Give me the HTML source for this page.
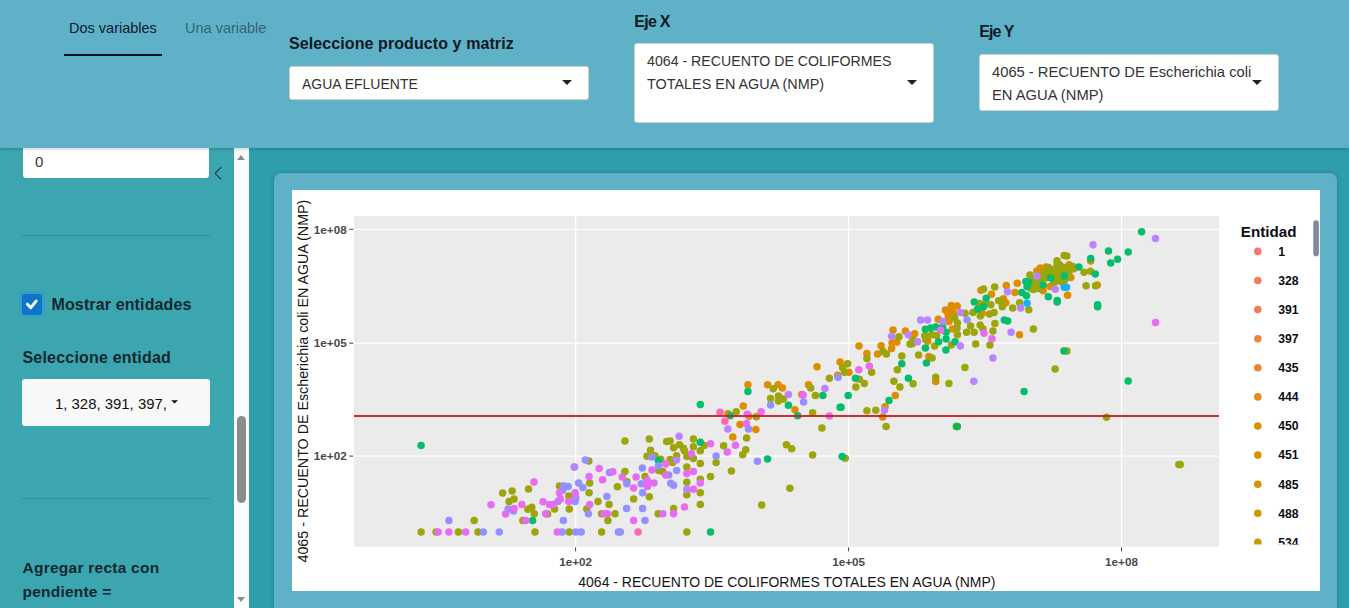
<!DOCTYPE html>
<html><head><meta charset="utf-8">
<style>
*{box-sizing:border-box;margin:0;padding:0}
html,body{width:1349px;height:608px;overflow:hidden;background:#2e9eaa;font-family:"Liberation Sans",sans-serif;color:#1a1a1a}
.abs{position:absolute}
.t{position:absolute;white-space:nowrap;transform-origin:0 50%;line-height:normal}
#hdr{position:absolute;left:0;top:0;width:1349px;height:148px;background:#5fb1c8;box-shadow:0 1px 3px rgba(0,0,0,.22);z-index:5}
.lbl{font-weight:bold;font-size:16px;color:#10191e}
.sel{position:absolute;background:#fff;border:1px solid #cfcfcf;border-radius:3px}
.st{font-size:15px;color:#333}
.caret{position:absolute;width:0;height:0;border-left:5px solid transparent;border-right:5px solid transparent;border-top:5px solid #222}
#side{position:absolute;left:0;top:148px;width:234px;height:460px;background:#3ba6b0;overflow:hidden}
#sb{position:absolute;left:234px;top:148px;width:15px;height:460px;background:#fcfcfc}
#card{position:absolute;left:274px;top:172.6px;width:1063px;height:470px;background:#5fb1c8;border-radius:7px;box-shadow:0 0 4px rgba(0,0,0,.22)}
#plot{position:absolute;left:292px;top:190px;width:1028px;height:401px;background:#fff}
</style></head><body>
<div id="hdr">
  <div class="t" style="left:69px;top:20px;font-size:14.5px;color:#10202c">Dos variables</div>
  <div class="abs" style="left:64px;top:54px;width:98px;height:2px;background:#0b1218"></div>
  <div class="t" style="left:185px;top:20px;font-size:14.5px;color:#356470">Una variable</div>

  <div class="t lbl" style="left:289px;top:35.4px;letter-spacing:0.09px">Seleccione producto y matriz</div>
  <div class="sel" style="left:288.6px;top:65.6px;width:300.8px;height:34.6px"></div>
  <div class="t st" style="left:301.6px;top:75px;transform:scaleX(.932)">AGUA EFLUENTE</div>
  <div class="caret" style="left:562px;top:80px"></div>

  <div class="t lbl" style="left:634.2px;top:12.6px;letter-spacing:-0.7px">Eje X</div>
  <div class="sel" style="left:633.6px;top:42.7px;width:300.8px;height:80.5px"></div>
  <div class="t st" style="left:646.6px;top:52.4px;transform:scaleX(.944)">4064 - RECUENTO DE COLIFORMES</div>
  <div class="t st" style="left:646.6px;top:74.8px;transform:scaleX(.96)">TOTALES EN AGUA (NMP)</div>
  <div class="caret" style="left:907px;top:80px"></div>

  <div class="t lbl" style="left:979.2px;top:23px;letter-spacing:-0.9px">Eje Y</div>
  <div class="sel" style="left:978.6px;top:53.8px;width:300.8px;height:57.5px"></div>
  <div class="t st" style="left:991.6px;top:62.7px;transform:scaleX(.982)">4065 - RECUENTO DE Escherichia coli</div>
  <div class="t st" style="left:991.6px;top:86.3px;transform:scaleX(.983)">EN AGUA (NMP)</div>
  <div class="caret" style="left:1252px;top:80px"></div>
</div>

<div id="side">
  <div class="abs" style="left:22.5px;top:-6px;width:186.5px;height:36px;background:#fff;border-radius:3px"></div>
  <div class="t st" style="left:35px;top:5.1px">0</div>
  <svg class="abs" style="left:212px;top:17px" width="12" height="18"><path d="M9.2 2.2 L3 8.3 L9.2 14.4" fill="none" stroke="#173844" stroke-width="1.1"/></svg>
  <div class="abs" style="left:22px;top:86.5px;width:188px;height:1px;background:#2f8f9b"></div>
  <div class="abs" style="left:18.5px;top:142.5px;width:26px;height:26px;border-radius:5px;background:#3a9cc4"></div>
  <div class="abs" style="left:22px;top:146px;width:20px;height:21px;border-radius:3px;background:#0b76c8"></div>
  <svg class="abs" style="left:22px;top:146px" width="20" height="21"><path d="M5.4 10.2 L8.8 13.6 L14.2 7" fill="none" stroke="#fff" stroke-width="3" stroke-linecap="round" stroke-linejoin="round"/></svg>
  <div class="t lbl" style="left:51.5px;top:147.8px;letter-spacing:0.13px;color:#12262e">Mostrar entidades</div>
  <div class="t lbl" style="left:22.5px;top:201.2px;letter-spacing:0.2px;color:#12262e">Seleccione entidad</div>
  <div class="abs" style="left:22px;top:231px;width:188px;height:46.5px;background:#f8f8f8;border-radius:3px"></div>
  <div class="t" style="left:54.6px;top:246.6px;font-size:15px;color:#111;transform:scaleX(.994)">1, 328, 391, 397,</div>
  <svg class="abs" style="left:170px;top:250px" width="10" height="8"><path d="M1.2 2.2 L8 2.2 L4.6 5.6 Z" fill="#111"/></svg>
  <div class="abs" style="left:22px;top:350px;width:188px;height:1px;background:#2f8f9b"></div>
  <div class="t lbl" style="left:22.5px;top:410.6px;font-size:15.5px;letter-spacing:0.25px;color:#12262e">Agregar recta con</div>
  <div class="t lbl" style="left:22.5px;top:434.8px;font-size:15.5px;letter-spacing:0.22px;color:#12262e">pendiente =</div>
</div>
<div id="sb">
  <div class="abs" style="left:3px;top:7px;width:0;height:0;border-left:4.5px solid transparent;border-right:4.5px solid transparent;border-bottom:5px solid #8b8b8b"></div>
  <div class="abs" style="left:3px;top:267.5px;width:9px;height:87px;border-radius:4.5px;background:#8c8c8c"></div>
  <div class="abs" style="left:3px;top:449px;width:0;height:0;border-left:4.5px solid transparent;border-right:4.5px solid transparent;border-top:5px solid #8b8b8b"></div>
</div>

<div id="card"></div>
<div id="plot">
<svg width="1028" height="401" viewBox="292 190 1028 401" style="position:absolute;left:0;top:0;font-family:'Liberation Sans',sans-serif">
  <rect x="354" y="216" width="865" height="330.7" fill="#ebebeb"/>
  <g stroke="#fff" stroke-width="1.3">
    <line x1="354" x2="1219" y1="229.3" y2="229.3"/><line x1="354" x2="1219" y1="343.2" y2="343.2"/><line x1="354" x2="1219" y1="456.1" y2="456.1"/>
    <line y1="216" y2="546.7" x1="575.6" x2="575.6"/><line y1="216" y2="546.7" x1="848.6" x2="848.6"/><line y1="216" y2="546.7" x1="1121.5" x2="1121.5"/>
  </g>
  <g id="pts">
<circle cx="732.8" cy="436.9" r="3.75" fill="#de8c00"/>
<circle cx="727.9" cy="413.8" r="3.75" fill="#de8c00"/>
<circle cx="743.3" cy="405.9" r="3.75" fill="#de8c00"/>
<circle cx="747.9" cy="384.7" r="3.75" fill="#de8c00"/>
<circle cx="748.9" cy="416.3" r="3.75" fill="#de8c00"/>
<circle cx="740.0" cy="424.6" r="3.75" fill="#de8c00"/>
<circle cx="755.8" cy="429.5" r="3.75" fill="#de8c00"/>
<circle cx="767.6" cy="384.7" r="3.75" fill="#de8c00"/>
<circle cx="778.1" cy="384.7" r="3.75" fill="#de8c00"/>
<circle cx="782.4" cy="388.1" r="3.75" fill="#de8c00"/>
<circle cx="794.9" cy="409.8" r="3.75" fill="#de8c00"/>
<circle cx="801.8" cy="394.6" r="3.75" fill="#de8c00"/>
<circle cx="808.5" cy="384.7" r="3.75" fill="#de8c00"/>
<circle cx="817.0" cy="366.8" r="3.75" fill="#de8c00"/>
<circle cx="837.7" cy="375.3" r="3.75" fill="#de8c00"/>
<circle cx="840.1" cy="362.0" r="3.75" fill="#de8c00"/>
<circle cx="848.9" cy="372.3" r="3.75" fill="#de8c00"/>
<circle cx="859.0" cy="346.1" r="3.75" fill="#de8c00"/>
<circle cx="866.9" cy="353.6" r="3.75" fill="#de8c00"/>
<circle cx="877.6" cy="353.9" r="3.75" fill="#de8c00"/>
<circle cx="881.1" cy="345.7" r="3.75" fill="#de8c00"/>
<circle cx="885.1" cy="406.8" r="3.75" fill="#de8c00"/>
<circle cx="882.7" cy="417.1" r="3.75" fill="#de8c00"/>
<circle cx="895.3" cy="395.6" r="3.75" fill="#de8c00"/>
<circle cx="891.6" cy="348.6" r="3.75" fill="#de8c00"/>
<circle cx="892.0" cy="342.7" r="3.75" fill="#de8c00"/>
<circle cx="896.9" cy="342.1" r="3.75" fill="#de8c00"/>
<circle cx="893.0" cy="329.9" r="3.75" fill="#de8c00"/>
<circle cx="905.4" cy="330.9" r="3.75" fill="#de8c00"/>
<circle cx="914.7" cy="333.8" r="3.75" fill="#de8c00"/>
<circle cx="1019.5" cy="334.8" r="3.75" fill="#de8c00"/>
<circle cx="935.7" cy="381.6" r="3.75" fill="#de8c00"/>
<circle cx="928.8" cy="356.5" r="3.75" fill="#de8c00"/>
<circle cx="927.8" cy="341.3" r="3.75" fill="#de8c00"/>
<circle cx="952.4" cy="328.9" r="3.75" fill="#de8c00"/>
<circle cx="948.9" cy="321.6" r="3.75" fill="#de8c00"/>
<circle cx="1067.6" cy="295.3" r="3.75" fill="#de8c00"/>
<circle cx="1090.7" cy="261.0" r="3.75" fill="#de8c00"/>
<circle cx="1046.1" cy="267.1" r="3.75" fill="#de8c00"/>
<circle cx="1036.8" cy="271.1" r="3.75" fill="#de8c00"/>
<circle cx="1073.7" cy="268.8" r="3.75" fill="#de8c00"/>
<circle cx="1069.1" cy="264.8" r="3.75" fill="#de8c00"/>
<circle cx="1070.8" cy="277.4" r="3.75" fill="#de8c00"/>
<circle cx="1097.3" cy="285.1" r="3.75" fill="#de8c00"/>
<circle cx="1050.1" cy="286.6" r="3.75" fill="#de8c00"/>
<circle cx="1043.2" cy="290.7" r="3.75" fill="#de8c00"/>
<circle cx="1017.3" cy="283.2" r="3.75" fill="#de8c00"/>
<circle cx="1006.3" cy="285.5" r="3.75" fill="#de8c00"/>
<circle cx="1015.0" cy="292.4" r="3.75" fill="#de8c00"/>
<circle cx="1037.1" cy="284.0" r="3.75" fill="#de8c00"/>
<circle cx="1040.3" cy="267.9" r="3.75" fill="#de8c00"/>
<circle cx="1003.5" cy="298.7" r="3.75" fill="#de8c00"/>
<circle cx="1005.8" cy="302.7" r="3.75" fill="#de8c00"/>
<circle cx="938.2" cy="319.2" r="3.75" fill="#de8c00"/>
<circle cx="945.4" cy="310.0" r="3.75" fill="#de8c00"/>
<circle cx="948.0" cy="313.9" r="3.75" fill="#de8c00"/>
<circle cx="951.3" cy="305.4" r="3.75" fill="#de8c00"/>
<circle cx="957.2" cy="306.1" r="3.75" fill="#de8c00"/>
<circle cx="948.0" cy="319.2" r="3.75" fill="#de8c00"/>
<circle cx="982.2" cy="313.3" r="3.75" fill="#de8c00"/>
<circle cx="980.9" cy="290.3" r="3.75" fill="#de8c00"/>
<circle cx="991.4" cy="294.2" r="3.75" fill="#de8c00"/>
<circle cx="952.6" cy="310.7" r="3.75" fill="#de8c00"/>
<circle cx="950.7" cy="317.9" r="3.75" fill="#de8c00"/>
<circle cx="953.9" cy="314.2" r="3.75" fill="#de8c00"/>
<circle cx="421.1" cy="532.0" r="3.75" fill="#9ca50a"/>
<circle cx="436.1" cy="532.0" r="3.75" fill="#9ca50a"/>
<circle cx="458.4" cy="532.0" r="3.75" fill="#9ca50a"/>
<circle cx="474.2" cy="520.6" r="3.75" fill="#9ca50a"/>
<circle cx="478.0" cy="532.0" r="3.75" fill="#9ca50a"/>
<circle cx="502.6" cy="493.0" r="3.75" fill="#9ca50a"/>
<circle cx="512.1" cy="491.0" r="3.75" fill="#9ca50a"/>
<circle cx="514.1" cy="499.1" r="3.75" fill="#9ca50a"/>
<circle cx="509.1" cy="501.4" r="3.75" fill="#9ca50a"/>
<circle cx="528.5" cy="489.0" r="3.75" fill="#9ca50a"/>
<circle cx="531.8" cy="507.2" r="3.75" fill="#9ca50a"/>
<circle cx="527.9" cy="509.3" r="3.75" fill="#9ca50a"/>
<circle cx="534.2" cy="513.7" r="3.75" fill="#9ca50a"/>
<circle cx="522.8" cy="520.6" r="3.75" fill="#9ca50a"/>
<circle cx="535.0" cy="532.0" r="3.75" fill="#9ca50a"/>
<circle cx="547.6" cy="514.1" r="3.75" fill="#9ca50a"/>
<circle cx="554.5" cy="508.9" r="3.75" fill="#9ca50a"/>
<circle cx="559.5" cy="485.9" r="3.75" fill="#9ca50a"/>
<circle cx="568.8" cy="496.1" r="3.75" fill="#9ca50a"/>
<circle cx="569.3" cy="508.9" r="3.75" fill="#9ca50a"/>
<circle cx="569.3" cy="532.0" r="3.75" fill="#9ca50a"/>
<circle cx="588.8" cy="461.0" r="3.75" fill="#9ca50a"/>
<circle cx="589.7" cy="482.9" r="3.75" fill="#9ca50a"/>
<circle cx="589.1" cy="492.8" r="3.75" fill="#9ca50a"/>
<circle cx="586.8" cy="508.9" r="3.75" fill="#9ca50a"/>
<circle cx="598.0" cy="501.4" r="3.75" fill="#9ca50a"/>
<circle cx="609.1" cy="504.6" r="3.75" fill="#9ca50a"/>
<circle cx="601.6" cy="513.7" r="3.75" fill="#9ca50a"/>
<circle cx="615.0" cy="513.7" r="3.75" fill="#9ca50a"/>
<circle cx="607.9" cy="520.6" r="3.75" fill="#9ca50a"/>
<circle cx="617.4" cy="486.8" r="3.75" fill="#9ca50a"/>
<circle cx="624.9" cy="471.4" r="3.75" fill="#9ca50a"/>
<circle cx="626.8" cy="481.7" r="3.75" fill="#9ca50a"/>
<circle cx="633.6" cy="499.1" r="3.75" fill="#9ca50a"/>
<circle cx="624.9" cy="440.9" r="3.75" fill="#9ca50a"/>
<circle cx="645.0" cy="476.4" r="3.75" fill="#9ca50a"/>
<circle cx="649.3" cy="496.7" r="3.75" fill="#9ca50a"/>
<circle cx="601.6" cy="532.0" r="3.75" fill="#9ca50a"/>
<circle cx="649.3" cy="438.9" r="3.75" fill="#9ca50a"/>
<circle cx="650.5" cy="450.3" r="3.75" fill="#9ca50a"/>
<circle cx="647.0" cy="456.2" r="3.75" fill="#9ca50a"/>
<circle cx="654.9" cy="455.7" r="3.75" fill="#9ca50a"/>
<circle cx="660.8" cy="459.2" r="3.75" fill="#9ca50a"/>
<circle cx="658.8" cy="470.5" r="3.75" fill="#9ca50a"/>
<circle cx="662.8" cy="471.4" r="3.75" fill="#9ca50a"/>
<circle cx="666.7" cy="441.4" r="3.75" fill="#9ca50a"/>
<circle cx="670.1" cy="440.9" r="3.75" fill="#9ca50a"/>
<circle cx="670.1" cy="459.6" r="3.75" fill="#9ca50a"/>
<circle cx="672.6" cy="462.6" r="3.75" fill="#9ca50a"/>
<circle cx="673.6" cy="447.8" r="3.75" fill="#9ca50a"/>
<circle cx="676.6" cy="455.7" r="3.75" fill="#9ca50a"/>
<circle cx="679.5" cy="444.8" r="3.75" fill="#9ca50a"/>
<circle cx="683.5" cy="448.2" r="3.75" fill="#9ca50a"/>
<circle cx="684.5" cy="450.7" r="3.75" fill="#9ca50a"/>
<circle cx="673.6" cy="508.6" r="3.75" fill="#9ca50a"/>
<circle cx="658.2" cy="513.7" r="3.75" fill="#9ca50a"/>
<circle cx="686.8" cy="456.6" r="3.75" fill="#9ca50a"/>
<circle cx="686.8" cy="466.9" r="3.75" fill="#9ca50a"/>
<circle cx="686.8" cy="482.3" r="3.75" fill="#9ca50a"/>
<circle cx="686.8" cy="494.7" r="3.75" fill="#9ca50a"/>
<circle cx="689.4" cy="455.7" r="3.75" fill="#9ca50a"/>
<circle cx="693.4" cy="458.6" r="3.75" fill="#9ca50a"/>
<circle cx="693.4" cy="438.9" r="3.75" fill="#9ca50a"/>
<circle cx="693.4" cy="446.8" r="3.75" fill="#9ca50a"/>
<circle cx="700.3" cy="450.7" r="3.75" fill="#9ca50a"/>
<circle cx="704.2" cy="445.4" r="3.75" fill="#9ca50a"/>
<circle cx="700.3" cy="463.6" r="3.75" fill="#9ca50a"/>
<circle cx="700.3" cy="479.3" r="3.75" fill="#9ca50a"/>
<circle cx="700.3" cy="492.8" r="3.75" fill="#9ca50a"/>
<circle cx="700.3" cy="504.6" r="3.75" fill="#9ca50a"/>
<circle cx="710.5" cy="476.4" r="3.75" fill="#9ca50a"/>
<circle cx="716.1" cy="462.6" r="3.75" fill="#9ca50a"/>
<circle cx="723.6" cy="445.8" r="3.75" fill="#9ca50a"/>
<circle cx="731.4" cy="471.1" r="3.75" fill="#9ca50a"/>
<circle cx="742.7" cy="454.7" r="3.75" fill="#9ca50a"/>
<circle cx="745.7" cy="449.7" r="3.75" fill="#9ca50a"/>
<circle cx="746.6" cy="437.9" r="3.75" fill="#9ca50a"/>
<circle cx="686.8" cy="532.0" r="3.75" fill="#9ca50a"/>
<circle cx="786.4" cy="444.8" r="3.75" fill="#9ca50a"/>
<circle cx="791.7" cy="448.8" r="3.75" fill="#9ca50a"/>
<circle cx="812.6" cy="455.1" r="3.75" fill="#9ca50a"/>
<circle cx="845.2" cy="458.2" r="3.75" fill="#9ca50a"/>
<circle cx="789.9" cy="488.2" r="3.75" fill="#9ca50a"/>
<circle cx="761.7" cy="505.0" r="3.75" fill="#9ca50a"/>
<circle cx="736.2" cy="411.8" r="3.75" fill="#9ca50a"/>
<circle cx="756.4" cy="416.7" r="3.75" fill="#9ca50a"/>
<circle cx="773.2" cy="388.7" r="3.75" fill="#9ca50a"/>
<circle cx="770.6" cy="398.6" r="3.75" fill="#9ca50a"/>
<circle cx="778.5" cy="396.0" r="3.75" fill="#9ca50a"/>
<circle cx="778.5" cy="400.9" r="3.75" fill="#9ca50a"/>
<circle cx="783.4" cy="398.9" r="3.75" fill="#9ca50a"/>
<circle cx="810.7" cy="388.1" r="3.75" fill="#9ca50a"/>
<circle cx="815.4" cy="395.4" r="3.75" fill="#9ca50a"/>
<circle cx="812.6" cy="412.8" r="3.75" fill="#9ca50a"/>
<circle cx="829.4" cy="378.2" r="3.75" fill="#9ca50a"/>
<circle cx="821.9" cy="428.0" r="3.75" fill="#9ca50a"/>
<circle cx="842.6" cy="367.4" r="3.75" fill="#9ca50a"/>
<circle cx="847.6" cy="363.8" r="3.75" fill="#9ca50a"/>
<circle cx="844.6" cy="372.3" r="3.75" fill="#9ca50a"/>
<circle cx="859.4" cy="379.2" r="3.75" fill="#9ca50a"/>
<circle cx="855.9" cy="387.1" r="3.75" fill="#9ca50a"/>
<circle cx="864.3" cy="383.6" r="3.75" fill="#9ca50a"/>
<circle cx="866.9" cy="358.5" r="3.75" fill="#9ca50a"/>
<circle cx="871.6" cy="372.3" r="3.75" fill="#9ca50a"/>
<circle cx="866.9" cy="410.8" r="3.75" fill="#9ca50a"/>
<circle cx="875.8" cy="410.2" r="3.75" fill="#9ca50a"/>
<circle cx="883.1" cy="351.6" r="3.75" fill="#9ca50a"/>
<circle cx="886.4" cy="354.1" r="3.75" fill="#9ca50a"/>
<circle cx="886.1" cy="426.6" r="3.75" fill="#9ca50a"/>
<circle cx="898.9" cy="336.8" r="3.75" fill="#9ca50a"/>
<circle cx="901.8" cy="356.1" r="3.75" fill="#9ca50a"/>
<circle cx="897.3" cy="369.7" r="3.75" fill="#9ca50a"/>
<circle cx="893.9" cy="381.2" r="3.75" fill="#9ca50a"/>
<circle cx="899.9" cy="387.1" r="3.75" fill="#9ca50a"/>
<circle cx="913.1" cy="383.8" r="3.75" fill="#9ca50a"/>
<circle cx="912.7" cy="339.7" r="3.75" fill="#9ca50a"/>
<circle cx="912.3" cy="343.7" r="3.75" fill="#9ca50a"/>
<circle cx="918.6" cy="355.1" r="3.75" fill="#9ca50a"/>
<circle cx="1066.9" cy="351.0" r="3.75" fill="#9ca50a"/>
<circle cx="1033.4" cy="328.9" r="3.75" fill="#9ca50a"/>
<circle cx="964.9" cy="367.4" r="3.75" fill="#9ca50a"/>
<circle cx="948.9" cy="383.6" r="3.75" fill="#9ca50a"/>
<circle cx="935.7" cy="377.2" r="3.75" fill="#9ca50a"/>
<circle cx="932.1" cy="357.9" r="3.75" fill="#9ca50a"/>
<circle cx="934.7" cy="346.1" r="3.75" fill="#9ca50a"/>
<circle cx="951.4" cy="345.1" r="3.75" fill="#9ca50a"/>
<circle cx="910.0" cy="344.1" r="3.75" fill="#9ca50a"/>
<circle cx="925.8" cy="339.7" r="3.75" fill="#9ca50a"/>
<circle cx="924.8" cy="335.8" r="3.75" fill="#9ca50a"/>
<circle cx="931.7" cy="334.8" r="3.75" fill="#9ca50a"/>
<circle cx="936.6" cy="335.4" r="3.75" fill="#9ca50a"/>
<circle cx="957.4" cy="334.8" r="3.75" fill="#9ca50a"/>
<circle cx="957.0" cy="327.9" r="3.75" fill="#9ca50a"/>
<circle cx="957.4" cy="323.0" r="3.75" fill="#9ca50a"/>
<circle cx="966.6" cy="332.2" r="3.75" fill="#9ca50a"/>
<circle cx="974.1" cy="332.2" r="3.75" fill="#9ca50a"/>
<circle cx="970.6" cy="325.9" r="3.75" fill="#9ca50a"/>
<circle cx="975.7" cy="344.1" r="3.75" fill="#9ca50a"/>
<circle cx="983.0" cy="328.9" r="3.75" fill="#9ca50a"/>
<circle cx="980.1" cy="324.9" r="3.75" fill="#9ca50a"/>
<circle cx="989.9" cy="345.1" r="3.75" fill="#9ca50a"/>
<circle cx="992.9" cy="330.9" r="3.75" fill="#9ca50a"/>
<circle cx="994.9" cy="323.4" r="3.75" fill="#9ca50a"/>
<circle cx="1055.2" cy="368.9" r="3.75" fill="#9ca50a"/>
<circle cx="1106.5" cy="417.2" r="3.75" fill="#9ca50a"/>
<circle cx="1178.9" cy="464.6" r="3.75" fill="#9ca50a"/>
<circle cx="1180.3" cy="464.6" r="3.75" fill="#9ca50a"/>
<circle cx="1064.2" cy="255.5" r="3.75" fill="#9ca50a"/>
<circle cx="1066.8" cy="255.9" r="3.75" fill="#9ca50a"/>
<circle cx="1057.0" cy="260.7" r="3.75" fill="#9ca50a"/>
<circle cx="1057.0" cy="264.8" r="3.75" fill="#9ca50a"/>
<circle cx="1048.4" cy="267.6" r="3.75" fill="#9ca50a"/>
<circle cx="1054.1" cy="269.4" r="3.75" fill="#9ca50a"/>
<circle cx="1059.9" cy="268.8" r="3.75" fill="#9ca50a"/>
<circle cx="1064.5" cy="267.6" r="3.75" fill="#9ca50a"/>
<circle cx="1069.1" cy="267.6" r="3.75" fill="#9ca50a"/>
<circle cx="1072.5" cy="266.5" r="3.75" fill="#9ca50a"/>
<circle cx="1062.2" cy="272.2" r="3.75" fill="#9ca50a"/>
<circle cx="1066.8" cy="273.4" r="3.75" fill="#9ca50a"/>
<circle cx="1056.4" cy="274.5" r="3.75" fill="#9ca50a"/>
<circle cx="1051.8" cy="274.5" r="3.75" fill="#9ca50a"/>
<circle cx="1029.9" cy="275.1" r="3.75" fill="#9ca50a"/>
<circle cx="1040.3" cy="274.5" r="3.75" fill="#9ca50a"/>
<circle cx="1057.6" cy="280.9" r="3.75" fill="#9ca50a"/>
<circle cx="1054.1" cy="282.6" r="3.75" fill="#9ca50a"/>
<circle cx="1064.5" cy="280.3" r="3.75" fill="#9ca50a"/>
<circle cx="1084.0" cy="272.2" r="3.75" fill="#9ca50a"/>
<circle cx="1090.4" cy="271.3" r="3.75" fill="#9ca50a"/>
<circle cx="1086.1" cy="285.8" r="3.75" fill="#9ca50a"/>
<circle cx="1095.6" cy="285.8" r="3.75" fill="#9ca50a"/>
<circle cx="1033.4" cy="289.5" r="3.75" fill="#9ca50a"/>
<circle cx="1035.7" cy="286.1" r="3.75" fill="#9ca50a"/>
<circle cx="1038.0" cy="281.4" r="3.75" fill="#9ca50a"/>
<circle cx="1046.1" cy="270.2" r="3.75" fill="#9ca50a"/>
<circle cx="1050.7" cy="271.3" r="3.75" fill="#9ca50a"/>
<circle cx="1047.4" cy="273.6" r="3.75" fill="#9ca50a"/>
<circle cx="1059.9" cy="265.1" r="3.75" fill="#9ca50a"/>
<circle cx="1064.5" cy="271.1" r="3.75" fill="#9ca50a"/>
<circle cx="1069.3" cy="270.9" r="3.75" fill="#9ca50a"/>
<circle cx="1071.6" cy="269.0" r="3.75" fill="#9ca50a"/>
<circle cx="1061.0" cy="276.8" r="3.75" fill="#9ca50a"/>
<circle cx="1068.2" cy="276.6" r="3.75" fill="#9ca50a"/>
<circle cx="1054.1" cy="278.6" r="3.75" fill="#9ca50a"/>
<circle cx="1059.9" cy="279.4" r="3.75" fill="#9ca50a"/>
<circle cx="1062.7" cy="282.8" r="3.75" fill="#9ca50a"/>
<circle cx="1034.5" cy="279.7" r="3.75" fill="#9ca50a"/>
<circle cx="1032.8" cy="285.1" r="3.75" fill="#9ca50a"/>
<circle cx="1030.9" cy="288.6" r="3.75" fill="#9ca50a"/>
<circle cx="1038.0" cy="288.6" r="3.75" fill="#9ca50a"/>
<circle cx="1040.5" cy="279.1" r="3.75" fill="#9ca50a"/>
<circle cx="1045.6" cy="278.0" r="3.75" fill="#9ca50a"/>
<circle cx="1002.3" cy="302.2" r="3.75" fill="#9ca50a"/>
<circle cx="1002.3" cy="306.8" r="3.75" fill="#9ca50a"/>
<circle cx="1019.6" cy="302.7" r="3.75" fill="#9ca50a"/>
<circle cx="1012.7" cy="307.9" r="3.75" fill="#9ca50a"/>
<circle cx="1028.8" cy="309.7" r="3.75" fill="#9ca50a"/>
<circle cx="954.6" cy="317.9" r="3.75" fill="#9ca50a"/>
<circle cx="965.1" cy="313.3" r="3.75" fill="#9ca50a"/>
<circle cx="973.0" cy="312.6" r="3.75" fill="#9ca50a"/>
<circle cx="979.6" cy="303.4" r="3.75" fill="#9ca50a"/>
<circle cx="980.3" cy="315.9" r="3.75" fill="#9ca50a"/>
<circle cx="983.6" cy="288.9" r="3.75" fill="#9ca50a"/>
<circle cx="994.7" cy="287.0" r="3.75" fill="#9ca50a"/>
<circle cx="990.8" cy="304.7" r="3.75" fill="#9ca50a"/>
<circle cx="994.1" cy="312.6" r="3.75" fill="#9ca50a"/>
<circle cx="989.5" cy="313.9" r="3.75" fill="#9ca50a"/>
<circle cx="998.7" cy="300.8" r="3.75" fill="#9ca50a"/>
<circle cx="985.5" cy="303.4" r="3.75" fill="#9ca50a"/>
<circle cx="956.4" cy="426.6" r="3.75" fill="#10ba45"/>
<circle cx="957.4" cy="426.6" r="3.75" fill="#10ba45"/>
<circle cx="421.1" cy="445.4" r="3.75" fill="#06bd6c"/>
<circle cx="532.6" cy="520.6" r="3.75" fill="#06bd6c"/>
<circle cx="658.4" cy="460.6" r="3.75" fill="#06bd6c"/>
<circle cx="700.3" cy="442.2" r="3.75" fill="#06bd6c"/>
<circle cx="710.5" cy="532.0" r="3.75" fill="#06bd6c"/>
<circle cx="767.6" cy="459.0" r="3.75" fill="#06bd6c"/>
<circle cx="842.2" cy="456.6" r="3.75" fill="#06bd6c"/>
<circle cx="700.3" cy="404.5" r="3.75" fill="#06bd6c"/>
<circle cx="730.3" cy="415.7" r="3.75" fill="#06bd6c"/>
<circle cx="747.9" cy="391.6" r="3.75" fill="#06bd6c"/>
<circle cx="788.4" cy="405.3" r="3.75" fill="#06bd6c"/>
<circle cx="797.6" cy="415.7" r="3.75" fill="#06bd6c"/>
<circle cx="822.9" cy="395.6" r="3.75" fill="#06bd6c"/>
<circle cx="840.1" cy="407.2" r="3.75" fill="#06bd6c"/>
<circle cx="841.1" cy="407.2" r="3.75" fill="#06bd6c"/>
<circle cx="848.2" cy="395.6" r="3.75" fill="#06bd6c"/>
<circle cx="855.5" cy="378.2" r="3.75" fill="#06bd6c"/>
<circle cx="889.0" cy="400.5" r="3.75" fill="#06bd6c"/>
<circle cx="901.8" cy="363.8" r="3.75" fill="#06bd6c"/>
<circle cx="908.4" cy="378.2" r="3.75" fill="#06bd6c"/>
<circle cx="1024.1" cy="391.6" r="3.75" fill="#06bd6c"/>
<circle cx="1063.9" cy="351.0" r="3.75" fill="#06bd6c"/>
<circle cx="926.4" cy="363.0" r="3.75" fill="#06bd6c"/>
<circle cx="925.4" cy="348.0" r="3.75" fill="#06bd6c"/>
<circle cx="945.9" cy="350.0" r="3.75" fill="#06bd6c"/>
<circle cx="938.6" cy="341.7" r="3.75" fill="#06bd6c"/>
<circle cx="946.1" cy="339.1" r="3.75" fill="#06bd6c"/>
<circle cx="955.0" cy="341.7" r="3.75" fill="#06bd6c"/>
<circle cx="925.4" cy="329.3" r="3.75" fill="#06bd6c"/>
<circle cx="930.7" cy="327.9" r="3.75" fill="#06bd6c"/>
<circle cx="935.7" cy="326.9" r="3.75" fill="#06bd6c"/>
<circle cx="942.6" cy="326.9" r="3.75" fill="#06bd6c"/>
<circle cx="946.1" cy="332.2" r="3.75" fill="#06bd6c"/>
<circle cx="1007.7" cy="321.0" r="3.75" fill="#06bd6c"/>
<circle cx="1004.3" cy="320.0" r="3.75" fill="#06bd6c"/>
<circle cx="1128.2" cy="381.1" r="3.75" fill="#06bd6c"/>
<circle cx="1141.6" cy="231.7" r="3.75" fill="#06bd6c"/>
<circle cx="1108.5" cy="250.9" r="3.75" fill="#06bd6c"/>
<circle cx="1128.2" cy="252.0" r="3.75" fill="#06bd6c"/>
<circle cx="1117.6" cy="259.3" r="3.75" fill="#06bd6c"/>
<circle cx="1110.7" cy="262.9" r="3.75" fill="#06bd6c"/>
<circle cx="1097.6" cy="304.7" r="3.75" fill="#06bd6c"/>
<circle cx="1097.6" cy="306.7" r="3.75" fill="#06bd6c"/>
<circle cx="1048.3" cy="296.8" r="3.75" fill="#06bd6c"/>
<circle cx="1057.2" cy="300.4" r="3.75" fill="#06bd6c"/>
<circle cx="1057.2" cy="302.0" r="3.75" fill="#06bd6c"/>
<circle cx="1090.7" cy="258.4" r="3.75" fill="#06bd6c"/>
<circle cx="1078.9" cy="267.1" r="3.75" fill="#06bd6c"/>
<circle cx="1095.3" cy="274.0" r="3.75" fill="#06bd6c"/>
<circle cx="1050.7" cy="278.0" r="3.75" fill="#06bd6c"/>
<circle cx="1064.2" cy="275.9" r="3.75" fill="#06bd6c"/>
<circle cx="1043.2" cy="285.1" r="3.75" fill="#06bd6c"/>
<circle cx="1025.9" cy="281.4" r="3.75" fill="#06bd6c"/>
<circle cx="1028.8" cy="282.0" r="3.75" fill="#06bd6c"/>
<circle cx="1027.1" cy="286.6" r="3.75" fill="#06bd6c"/>
<circle cx="1021.9" cy="292.4" r="3.75" fill="#06bd6c"/>
<circle cx="1026.5" cy="295.8" r="3.75" fill="#06bd6c"/>
<circle cx="974.3" cy="302.1" r="3.75" fill="#06bd6c"/>
<circle cx="977.6" cy="309.3" r="3.75" fill="#06bd6c"/>
<circle cx="983.6" cy="306.7" r="3.75" fill="#06bd6c"/>
<circle cx="986.2" cy="298.2" r="3.75" fill="#06bd6c"/>
<circle cx="1064.2" cy="287.2" r="3.75" fill="#1ab0f5"/>
<circle cx="1066.5" cy="287.2" r="3.75" fill="#1ab0f5"/>
<circle cx="1027.1" cy="303.3" r="3.75" fill="#1ab0f5"/>
<circle cx="448.9" cy="520.6" r="3.75" fill="#9590ff"/>
<circle cx="483.3" cy="532.0" r="3.75" fill="#9590ff"/>
<circle cx="499.3" cy="532.0" r="3.75" fill="#9590ff"/>
<circle cx="508.2" cy="508.9" r="3.75" fill="#9590ff"/>
<circle cx="513.5" cy="510.9" r="3.75" fill="#9590ff"/>
<circle cx="563.8" cy="485.9" r="3.75" fill="#9590ff"/>
<circle cx="568.2" cy="486.6" r="3.75" fill="#9590ff"/>
<circle cx="562.8" cy="490.2" r="3.75" fill="#9590ff"/>
<circle cx="557.9" cy="501.4" r="3.75" fill="#9590ff"/>
<circle cx="575.1" cy="492.8" r="3.75" fill="#9590ff"/>
<circle cx="575.1" cy="501.4" r="3.75" fill="#9590ff"/>
<circle cx="563.4" cy="520.6" r="3.75" fill="#9590ff"/>
<circle cx="562.2" cy="532.0" r="3.75" fill="#9590ff"/>
<circle cx="575.7" cy="532.0" r="3.75" fill="#9590ff"/>
<circle cx="578.6" cy="482.9" r="3.75" fill="#9590ff"/>
<circle cx="574.3" cy="466.9" r="3.75" fill="#9590ff"/>
<circle cx="585.4" cy="460.0" r="3.75" fill="#9590ff"/>
<circle cx="582.8" cy="487.6" r="3.75" fill="#9590ff"/>
<circle cx="575.9" cy="498.1" r="3.75" fill="#9590ff"/>
<circle cx="588.4" cy="513.7" r="3.75" fill="#9590ff"/>
<circle cx="606.9" cy="496.5" r="3.75" fill="#9590ff"/>
<circle cx="609.5" cy="472.4" r="3.75" fill="#9590ff"/>
<circle cx="626.8" cy="483.7" r="3.75" fill="#9590ff"/>
<circle cx="626.6" cy="508.6" r="3.75" fill="#9590ff"/>
<circle cx="642.4" cy="468.1" r="3.75" fill="#9590ff"/>
<circle cx="641.4" cy="483.7" r="3.75" fill="#9590ff"/>
<circle cx="642.6" cy="492.8" r="3.75" fill="#9590ff"/>
<circle cx="642.6" cy="508.6" r="3.75" fill="#9590ff"/>
<circle cx="645.0" cy="520.6" r="3.75" fill="#9590ff"/>
<circle cx="581.2" cy="532.0" r="3.75" fill="#9590ff"/>
<circle cx="618.4" cy="532.0" r="3.75" fill="#9590ff"/>
<circle cx="620.3" cy="532.0" r="3.75" fill="#9590ff"/>
<circle cx="651.9" cy="457.0" r="3.75" fill="#9590ff"/>
<circle cx="658.4" cy="466.1" r="3.75" fill="#9590ff"/>
<circle cx="668.7" cy="475.0" r="3.75" fill="#9590ff"/>
<circle cx="676.6" cy="470.5" r="3.75" fill="#9590ff"/>
<circle cx="670.7" cy="483.3" r="3.75" fill="#9590ff"/>
<circle cx="673.6" cy="485.3" r="3.75" fill="#9590ff"/>
<circle cx="716.1" cy="456.1" r="3.75" fill="#9590ff"/>
<circle cx="757.4" cy="461.2" r="3.75" fill="#9590ff"/>
<circle cx="748.5" cy="429.1" r="3.75" fill="#9590ff"/>
<circle cx="770.6" cy="404.9" r="3.75" fill="#9590ff"/>
<circle cx="803.6" cy="401.9" r="3.75" fill="#9590ff"/>
<circle cx="838.1" cy="377.2" r="3.75" fill="#9590ff"/>
<circle cx="967.1" cy="319.9" r="3.75" fill="#9590ff"/>
<circle cx="574.5" cy="466.9" r="3.75" fill="#bb83ff"/>
<circle cx="676.6" cy="460.0" r="3.75" fill="#bb83ff"/>
<circle cx="679.1" cy="436.3" r="3.75" fill="#bb83ff"/>
<circle cx="686.8" cy="489.2" r="3.75" fill="#bb83ff"/>
<circle cx="727.9" cy="429.1" r="3.75" fill="#bb83ff"/>
<circle cx="788.4" cy="394.6" r="3.75" fill="#bb83ff"/>
<circle cx="824.9" cy="388.5" r="3.75" fill="#bb83ff"/>
<circle cx="884.5" cy="410.2" r="3.75" fill="#bb83ff"/>
<circle cx="891.6" cy="336.2" r="3.75" fill="#bb83ff"/>
<circle cx="908.4" cy="334.8" r="3.75" fill="#bb83ff"/>
<circle cx="917.6" cy="341.7" r="3.75" fill="#bb83ff"/>
<circle cx="1011.1" cy="332.2" r="3.75" fill="#bb83ff"/>
<circle cx="992.9" cy="357.9" r="3.75" fill="#bb83ff"/>
<circle cx="973.8" cy="381.2" r="3.75" fill="#bb83ff"/>
<circle cx="960.3" cy="346.1" r="3.75" fill="#bb83ff"/>
<circle cx="942.6" cy="321.6" r="3.75" fill="#bb83ff"/>
<circle cx="1155.5" cy="238.6" r="3.75" fill="#bb83ff"/>
<circle cx="1093.0" cy="244.8" r="3.75" fill="#bb83ff"/>
<circle cx="1055.3" cy="289.2" r="3.75" fill="#bb83ff"/>
<circle cx="1037.1" cy="276.3" r="3.75" fill="#bb83ff"/>
<circle cx="1007.5" cy="291.8" r="3.75" fill="#bb83ff"/>
<circle cx="1020.7" cy="307.9" r="3.75" fill="#bb83ff"/>
<circle cx="920.7" cy="319.9" r="3.75" fill="#bb83ff"/>
<circle cx="927.6" cy="320.1" r="3.75" fill="#bb83ff"/>
<circle cx="960.5" cy="312.6" r="3.75" fill="#bb83ff"/>
<circle cx="438.1" cy="532.0" r="3.75" fill="#e76bf3"/>
<circle cx="448.9" cy="532.0" r="3.75" fill="#e76bf3"/>
<circle cx="465.7" cy="532.0" r="3.75" fill="#e76bf3"/>
<circle cx="491.0" cy="504.8" r="3.75" fill="#e76bf3"/>
<circle cx="514.1" cy="508.6" r="3.75" fill="#e76bf3"/>
<circle cx="505.6" cy="513.9" r="3.75" fill="#e76bf3"/>
<circle cx="521.8" cy="504.6" r="3.75" fill="#e76bf3"/>
<circle cx="534.0" cy="482.1" r="3.75" fill="#e76bf3"/>
<circle cx="525.7" cy="520.6" r="3.75" fill="#e76bf3"/>
<circle cx="543.1" cy="501.8" r="3.75" fill="#e76bf3"/>
<circle cx="545.7" cy="513.7" r="3.75" fill="#e76bf3"/>
<circle cx="549.6" cy="504.6" r="3.75" fill="#e76bf3"/>
<circle cx="553.0" cy="504.6" r="3.75" fill="#e76bf3"/>
<circle cx="559.5" cy="492.8" r="3.75" fill="#e76bf3"/>
<circle cx="560.3" cy="499.1" r="3.75" fill="#e76bf3"/>
<circle cx="575.1" cy="494.1" r="3.75" fill="#e76bf3"/>
<circle cx="568.8" cy="501.4" r="3.75" fill="#e76bf3"/>
<circle cx="557.3" cy="532.0" r="3.75" fill="#e76bf3"/>
<circle cx="589.1" cy="476.4" r="3.75" fill="#e76bf3"/>
<circle cx="589.7" cy="504.6" r="3.75" fill="#e76bf3"/>
<circle cx="599.2" cy="468.5" r="3.75" fill="#e76bf3"/>
<circle cx="602.6" cy="479.7" r="3.75" fill="#e76bf3"/>
<circle cx="603.9" cy="513.7" r="3.75" fill="#e76bf3"/>
<circle cx="607.5" cy="513.7" r="3.75" fill="#e76bf3"/>
<circle cx="612.8" cy="471.8" r="3.75" fill="#e76bf3"/>
<circle cx="622.3" cy="477.0" r="3.75" fill="#e76bf3"/>
<circle cx="633.6" cy="488.0" r="3.75" fill="#e76bf3"/>
<circle cx="633.6" cy="520.6" r="3.75" fill="#e76bf3"/>
<circle cx="636.1" cy="477.0" r="3.75" fill="#e76bf3"/>
<circle cx="647.4" cy="480.3" r="3.75" fill="#e76bf3"/>
<circle cx="647.4" cy="483.3" r="3.75" fill="#e76bf3"/>
<circle cx="647.4" cy="486.6" r="3.75" fill="#e76bf3"/>
<circle cx="653.9" cy="482.9" r="3.75" fill="#e76bf3"/>
<circle cx="651.9" cy="469.9" r="3.75" fill="#e76bf3"/>
<circle cx="665.7" cy="463.9" r="3.75" fill="#e76bf3"/>
<circle cx="665.7" cy="475.0" r="3.75" fill="#e76bf3"/>
<circle cx="673.6" cy="513.7" r="3.75" fill="#e76bf3"/>
<circle cx="662.8" cy="513.7" r="3.75" fill="#e76bf3"/>
<circle cx="684.5" cy="507.0" r="3.75" fill="#e76bf3"/>
<circle cx="686.8" cy="473.4" r="3.75" fill="#e76bf3"/>
<circle cx="691.4" cy="453.7" r="3.75" fill="#e76bf3"/>
<circle cx="693.4" cy="471.4" r="3.75" fill="#e76bf3"/>
<circle cx="693.4" cy="489.2" r="3.75" fill="#e76bf3"/>
<circle cx="700.3" cy="482.9" r="3.75" fill="#e76bf3"/>
<circle cx="710.5" cy="443.8" r="3.75" fill="#e76bf3"/>
<circle cx="727.3" cy="452.1" r="3.75" fill="#e76bf3"/>
<circle cx="735.4" cy="445.2" r="3.75" fill="#e76bf3"/>
<circle cx="747.3" cy="414.3" r="3.75" fill="#e76bf3"/>
<circle cx="761.1" cy="411.8" r="3.75" fill="#e76bf3"/>
<circle cx="746.5" cy="423.6" r="3.75" fill="#e76bf3"/>
<circle cx="803.2" cy="395.0" r="3.75" fill="#e76bf3"/>
<circle cx="829.4" cy="416.1" r="3.75" fill="#e76bf3"/>
<circle cx="858.8" cy="369.7" r="3.75" fill="#e76bf3"/>
<circle cx="869.3" cy="366.0" r="3.75" fill="#e76bf3"/>
<circle cx="940.6" cy="329.9" r="3.75" fill="#e76bf3"/>
<circle cx="984.0" cy="333.2" r="3.75" fill="#e76bf3"/>
<circle cx="991.9" cy="338.8" r="3.75" fill="#e76bf3"/>
<circle cx="1155.5" cy="322.5" r="3.75" fill="#e76bf3"/>
<circle cx="638.1" cy="532.0" r="3.75" fill="#ff66b3"/>
<circle cx="720.0" cy="412.2" r="3.75" fill="#ff66b3"/>
<circle cx="724.9" cy="421.2" r="3.75" fill="#ff66b3"/>
</g>
  <line x1="354" x2="1219" y1="416.1" y2="416.1" stroke="#cb1f24" stroke-width="2" opacity=".92"/>
  <g fill="#4a4a4a" font-size="11.7" font-weight="bold">
    <text x="346.7" y="233.5" text-anchor="end">1e+08</text>
    <text x="346.7" y="347.4" text-anchor="end">1e+05</text>
    <text x="346.7" y="460.3" text-anchor="end">1e+02</text>
    <text x="575.6" y="565.5" text-anchor="middle">1e+02</text>
    <text x="848.6" y="565.5" text-anchor="middle">1e+05</text>
    <text x="1121.5" y="565.5" text-anchor="middle">1e+08</text>
  </g>
  <g stroke="#444" stroke-width="1">
    <line x1="349.3" x2="353.3" y1="229.3" y2="229.3"/><line x1="349.3" x2="353.3" y1="343.2" y2="343.2"/><line x1="349.3" x2="353.3" y1="456.1" y2="456.1"/>
    <line y1="547.4" y2="551.4" x1="575.6" x2="575.6"/><line y1="547.4" y2="551.4" x1="848.6" x2="848.6"/><line y1="547.4" y2="551.4" x1="1121.5" x2="1121.5"/>
  </g>
  <text x="578.3" y="586.6" font-size="14.1" fill="#161616" textLength="417.1" lengthAdjust="spacingAndGlyphs">4064 - RECUENTO DE COLIFORMES TOTALES EN AGUA (NMP)</text>
  <text transform="translate(308.2,562.5) rotate(-90)" font-size="14.3" fill="#161616" textLength="362.8" lengthAdjust="spacingAndGlyphs">4065 - RECUENTO DE Escherichia coli EN AGUA (NMP)</text>
  <text x="1240.8" y="236.7" font-size="14.6" font-weight="bold" fill="#0c0c14" textLength="55.6" lengthAdjust="spacingAndGlyphs">Entidad</text>
  <rect x="1313.3" y="220.3" width="5.6" height="36.1" rx="2.8" fill="#8088a2"/>
  <g id="leg" font-size="12.2" font-weight="bold" fill="#0c0c14">
<clipPath id="lc"><rect x="1225" y="215" width="90" height="329.5"/></clipPath><g clip-path="url(#lc)">
<circle cx="1257.8" cy="251.4" r="3.8" fill="#f8766d"/><text x="1278.2" y="255.7">1</text>
<circle cx="1257.8" cy="280.5" r="3.8" fill="#f47b62"/><text x="1278.2" y="284.8">328</text>
<circle cx="1257.8" cy="309.6" r="3.8" fill="#f17f55"/><text x="1278.2" y="313.9">391</text>
<circle cx="1257.8" cy="338.7" r="3.8" fill="#ed8347"/><text x="1278.2" y="343.0">397</text>
<circle cx="1257.8" cy="367.8" r="3.8" fill="#e98736"/><text x="1278.2" y="372.1">435</text>
<circle cx="1257.8" cy="396.9" r="3.8" fill="#e58a20"/><text x="1278.2" y="401.2">444</text>
<circle cx="1257.8" cy="426.0" r="3.8" fill="#e18d00"/><text x="1278.2" y="430.3">450</text>
<circle cx="1257.8" cy="455.1" r="3.8" fill="#dc9000"/><text x="1278.2" y="459.4">451</text>
<circle cx="1257.8" cy="484.2" r="3.8" fill="#d79300"/><text x="1278.2" y="488.5">485</text>
<circle cx="1257.8" cy="513.3" r="3.8" fill="#d29600"/><text x="1278.2" y="517.6">488</text>
<circle cx="1257.8" cy="542.4" r="3.8" fill="#cc9900"/><text x="1278.2" y="546.7">534</text>
</g>
</g>
</svg>
</div>
</body></html>
